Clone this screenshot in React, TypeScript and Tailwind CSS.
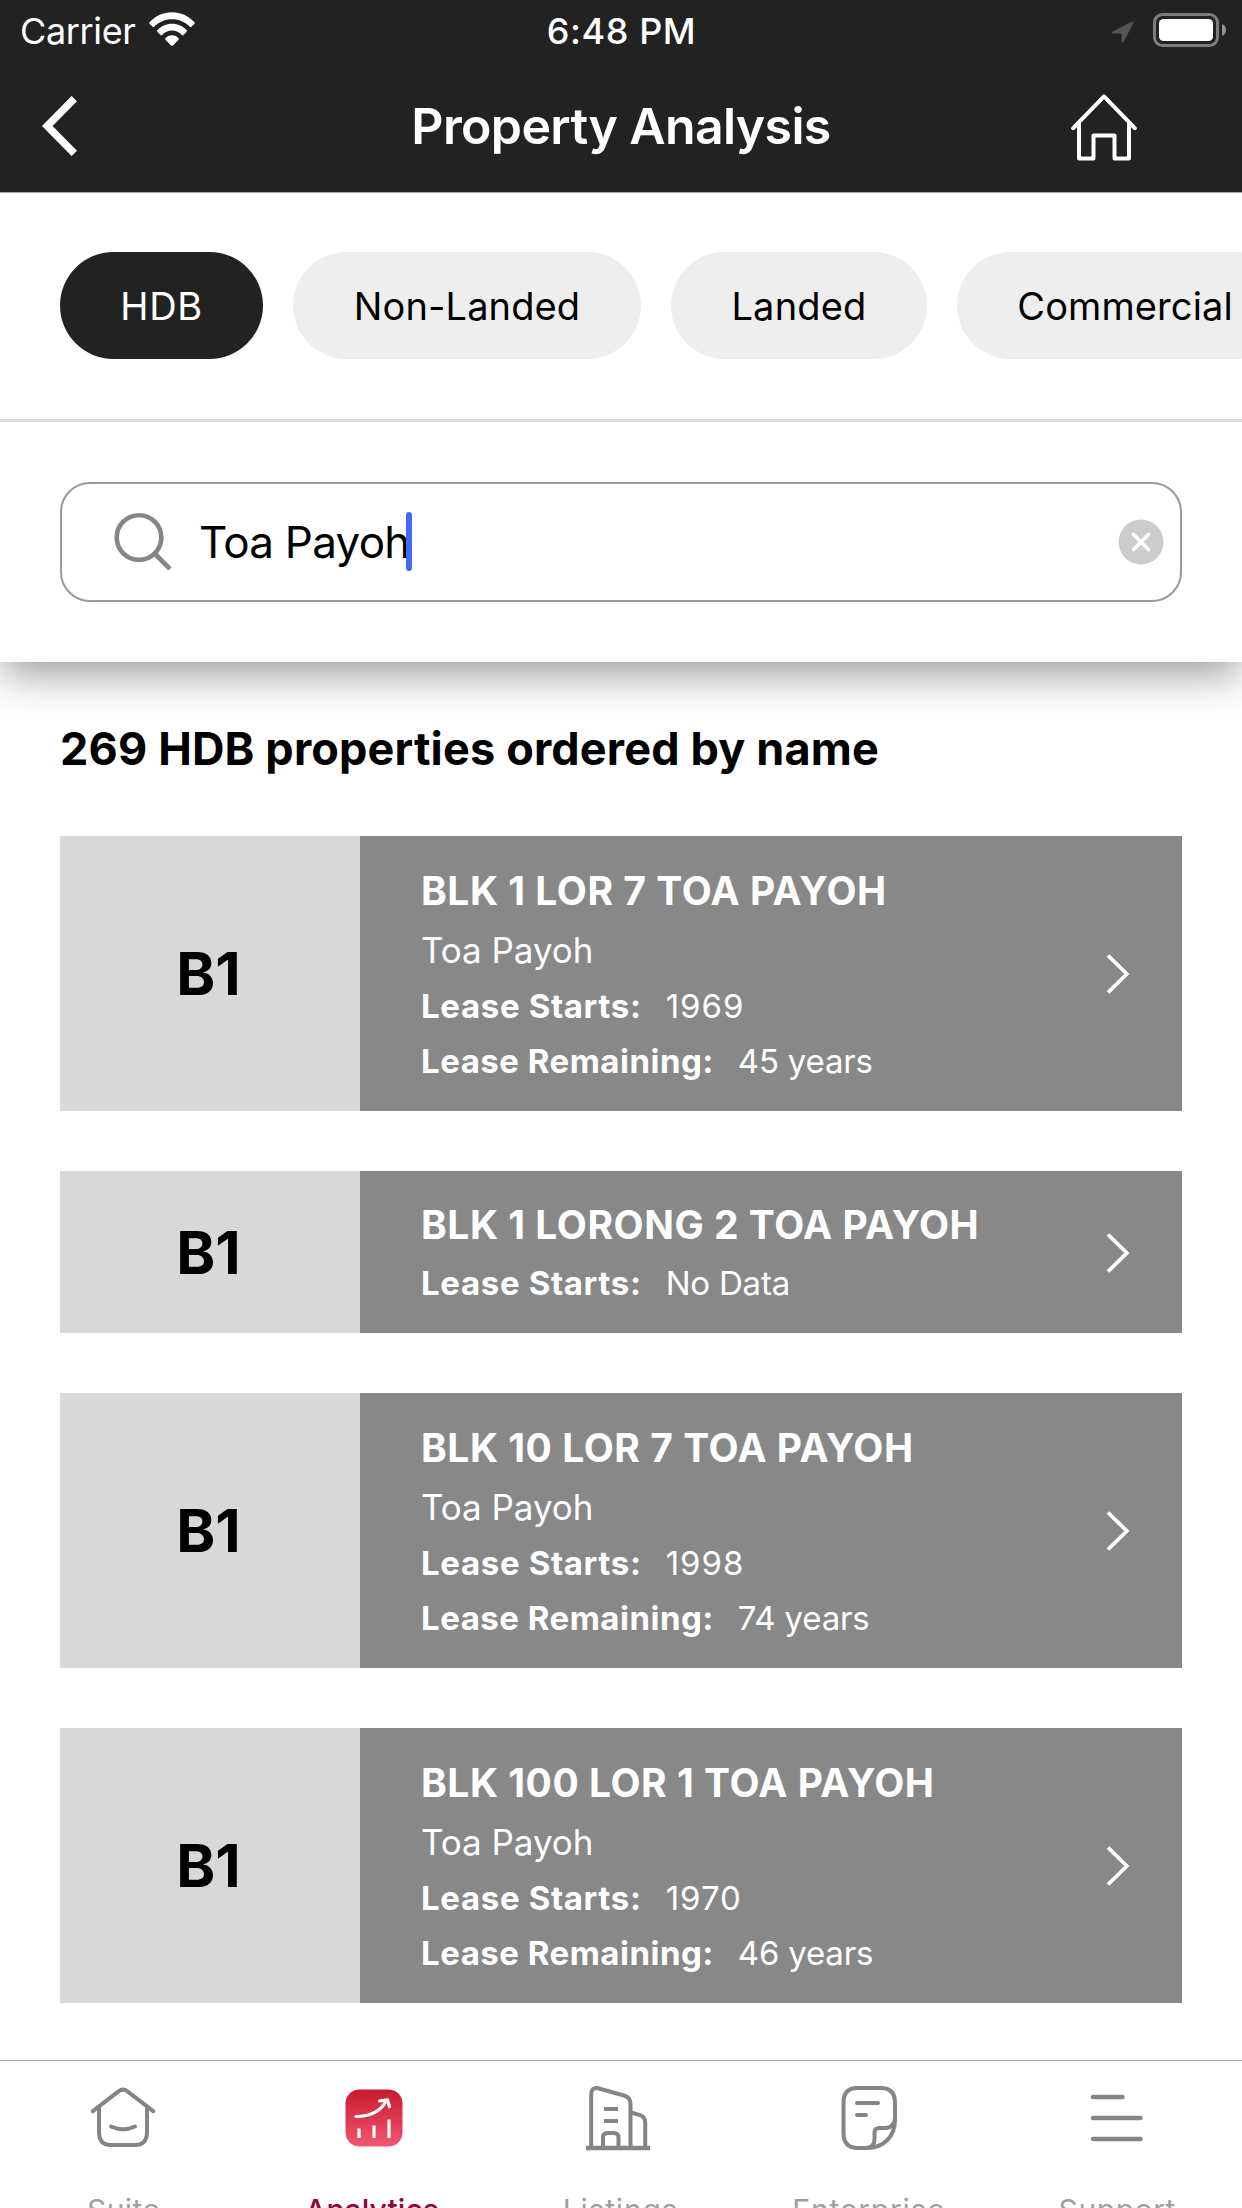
import React from 'react';

type Property = {
  code: string;
  name: string;
  area?: string;
  starts: string;
  remaining?: string;
};

const properties: Property[] = [
  { code: 'B1', name: 'BLK 1 LOR 7 TOA PAYOH', area: 'Toa Payoh', starts: '1969', remaining: '45 years' },
  { code: 'B1', name: 'BLK 1 LORONG 2 TOA PAYOH', starts: 'No Data' },
  { code: 'B1', name: 'BLK 10 LOR 7 TOA PAYOH', area: 'Toa Payoh', starts: '1998', remaining: '74 years' },
  { code: 'B1', name: 'BLK 100 LOR 1 TOA PAYOH', area: 'Toa Payoh', starts: '1970', remaining: '46 years' },
];

const categories = [
  { label: 'HDB', style: 'w-[203px] bg-[#222222] text-white tracking-[0.6px]' },
  { label: 'Non-Landed', style: 'w-[348px] bg-[#eeeeee] text-black tracking-[0.1px]' },
  { label: 'Landed', style: 'w-[256px] bg-[#eeeeee] text-black tracking-[0.2px]' },
  { label: 'Commercial', style: 'w-[334px] bg-[#eeeeee] text-black tracking-[0.1px] pl-[2px]' },
];

function StatusBar() {
  return (
    <div className="grid h-[62px] grid-cols-3 items-center pl-[20px] pr-[15px] text-[36px]">
      <div className="flex items-center">
        <span className="w-[129px] tracking-[-0.35px]">Carrier</span>
        <svg width="46" height="34" viewBox="0 0 46 34" className="-mt-1" fill="white">
          <path d="M0.5 10.2C6.5 3.8 14.3 0.3 23 0.3s16.5 3.5 22.5 9.9c.4.5.4 1 0 1.500l-3 3c-.5.500-1.100.500-1.600 0C36 9.800 29.800 7.200 23 7.200S10 9.800 5.100 14.700c-.5.500-1.100.500-1.600 0l-3-3c-.4-.5-.4-1 0-1.500z" />
          <path d="M8.300 18.200C12.200 14 17.300 11.700 23 11.700s10.800 2.300 14.700 6.500c.4.500.4 1 0 1.500l-3.200 3.200c-.5.500-1.100.500-1.600 0-2.700-2.700-6.100-4.300-9.900-4.300s-7.200 1.600-9.900 4.300c-.5.500-1.100.500-1.600 0l-3.200-3.200c-.4-.5-.4-1 0-1.500z" />
          <path d="M16.400 26.300c1.800-1.900 4-3 6.600-3s4.800 1.100 6.600 3c.4.500.4 1 0 1.500l-5.700 5.600c-.6.600-1.200.6-1.800 0l-5.700-5.600c-.4-.5-.4-1 0-1.500z" />
        </svg>
      </div>
      <span className="pr-[4px] text-center font-medium tracking-[0.6px] whitespace-nowrap">6:48 PM</span>
      <div className="flex items-center justify-end gap-[19px]">
        <svg width="22" height="22" viewBox="0 0 22 22" className="mt-[1px]">
          <path d="M20.500 0.400 1 10.200C-.4 11 0 12.400 1.500 12.400H8.800c.4 0 .7.300.7.700v7.200c0 1.600 1.600 2 2.300.5L21.500 1.700c.4-.9-.2-1.700-1-1.300z" fill="#545454" />
        </svg>
        <svg width="74" height="34" viewBox="0 0 74 34" className="-mt-[2px]">
          <rect x="1.500" y="1.500" width="63" height="31" rx="8" fill="none" stroke="#7d7d7d" strokeWidth="3" />
          <rect x="6" y="6" width="54" height="22" rx="4.500" fill="white" />
          <path d="M69 11c2.600 1 4 3.300 4 6s-1.400 5-4 6z" fill="#909090" />
        </svg>
      </div>
    </div>
  );
}

function NavBar() {
  return (
    <div className="grid h-[130px] grid-cols-[1fr_auto_1fr] items-center pb-[2px]">
      <svg width="36" height="60" viewBox="0 0 36 60" className="ml-[42px]" fill="none" stroke="white" strokeWidth="7.500">
        <path d="M32.300 2.600 5.200 30l27.100 27.400" />
      </svg>
      <h1 className="text-[50px] font-semibold tracking-[-0.65px]">Property Analysis</h1>
      <svg width="66" height="67" viewBox="0 0 66 67" className="mr-[105px] mt-[2px] justify-self-end" fill="none" stroke="white" strokeWidth="4" strokeLinejoin="round" strokeLinecap="round">
        <path d="M2.200 34.200 33 2.400l30.800 31.800" />
        <path d="M8 30v34.500h14.500v-23h21v23H58V30" />
      </svg>
    </div>
  );
}

function SearchField() {
  return (
    <div className="flex h-[120px] items-center rounded-[30px] border-2 border-[#9a9a9a] pl-[52px] pr-[16px]">
      <svg width="58" height="58" viewBox="0 0 58 58" className="-mt-[2px]" fill="none" stroke="#858585" strokeWidth="4.600">
        <circle cx="25" cy="25.500" r="22.300" />
        <path d="m40.500 41.500 15.500 15.500" />
      </svg>
      <span className="ml-[27px] text-[44px] tracking-[-0.75px] text-black">Toa Payoh</span>
      <span className="-ml-[4px] -mt-[2px] h-[59px] w-[6px] rounded-full bg-[#4169f5]" />
      <svg width="46" height="46" viewBox="0 0 46 46" className="ml-auto -mt-[1px]">
        <circle cx="23" cy="23" r="22.500" fill="#cccccc" />
        <path d="m15.500 15.500 15 15m0-15-15 15" stroke="white" strokeWidth="3.800" strokeLinecap="round" />
      </svg>
    </div>
  );
}

function LeaseLine({ label, value, labelStyle }: { label: string; value: string; labelStyle: string }) {
  const isYear = /^\d+$/.test(value);
  return (
    <p className="flex gap-[24px] text-[33px] leading-[55px] whitespace-nowrap">
      <span className={`font-bold ${labelStyle}`}>{label}</span>
      <span className={isYear ? 'tracking-[1px]' : 'tracking-[-0.2px]'}>{value}</span>
    </p>
  );
}

function PropertyCard({ property }: { property: Property }) {
  return (
    <li className={`flex ${property.area ? 'h-[275px]' : 'h-[162px]'}`}>
      <div className="flex w-[300px] items-center justify-center bg-[#d8d8d8] pt-[2px] pr-[3px] text-[59px] font-bold text-black">
        {property.code}
      </div>
      <div className="flex flex-1 items-center justify-between bg-[#888888] pl-[61px] pr-[52px] text-white">
        <div className={`self-start ${property.area ? 'pt-[27px]' : 'pt-[26px]'}`}>
          <h3 className="mb-[3px] text-[39px] leading-[56px] font-bold tracking-[0.53px] whitespace-nowrap">{property.name}</h3>
          {property.area && <p className="text-[35px] leading-[57px] tracking-[-0.05px]">{property.area}</p>}
          <LeaseLine label="Lease Starts:" value={property.starts} labelStyle="tracking-[0.65px]" />
          {property.remaining && (
            <LeaseLine label="Lease Remaining:" value={property.remaining} labelStyle="tracking-[0.5px]" />
          )}
        </div>
        <svg width="24" height="40" viewBox="0 0 24 40" className="mt-[1px]" fill="none" stroke="white" strokeWidth="3.800">
          <path d="M2 1.500 20.800 20 2 38.500" />
        </svg>
      </div>
    </li>
  );
}

function SuiteIcon() {
  return (
    <svg width="66" height="66" viewBox="0 0 66 66" className="mr-[3px]" fill="none" stroke="#858585" strokeWidth="4" strokeLinecap="round">
      <path d="M2.800 26.200 28.500 6.300q4.500-3.300 9 0L63.200 26.200" />
      <path d="M9 22v24.500Q9 60 20.500 60h25Q57 60 57 46.500V22" />
      <path d="M21 41.500q12 5.600 24 0" />
    </svg>
  );
}

function AnalyticsIcon() {
  return (
    <svg width="66" height="66" viewBox="0 0 66 66" className="ml-[3px]" fill="none">
      <defs>
        <linearGradient id="analytics" x1="0" y1="0" x2="0" y2="1">
          <stop offset="0" stopColor="#c71a2e" />
          <stop offset="1" stopColor="#f25672" />
        </linearGradient>
      </defs>
      <rect x="4.500" y="4.500" width="57" height="57" rx="14" fill="url(#analytics)" />
      <g stroke="white" strokeWidth="3.200">
        <path d="M15 31.500c15 0 24.500-5 30-15.500" strokeLinecap="round" />
        <path d="m38.500 16 8-1.200 2 7" strokeLinecap="round" strokeLinejoin="round" />
        <path d="M18 43.500v9.500M33 40.500V53M48 34.500V53" />
      </g>
    </svg>
  );
}

function ListingsIcon() {
  return (
    <svg width="66" height="66" viewBox="0 0 66 66" className="mr-[6px]" fill="none" stroke="#858585" strokeWidth="4">
      <path d="M1 63h64" strokeWidth="4.400" />
      <path d="M6.200 63V10.500Q6.200 1.500 13 3.200L39 10.500Q45.500 12.300 45.500 19V63" />
      <path d="M46 27.500 55 30.200Q60.200 32 60.200 38V63" />
      <path d="M19 24h14M19 36h14" />
      <path d="M18 63V52.500Q18 48 22.500 48h6.500Q33.500 48 33.500 52.500V63" />
    </svg>
  );
}

function EnterpriseIcon() {
  return (
    <svg width="66" height="66" viewBox="0 0 66 66" fill="none" stroke="#858585" strokeWidth="4" strokeLinecap="round" strokeLinejoin="round">
      <path d="M7.500 33V18Q7.500 3 21 3H45Q59 3 59 18V35C59 51 48 63 31 63H22Q7.500 63 7.500 48z" />
      <path d="M30 63Q38.500 62.500 38.500 54.500V48Q38.500 42.500 44 43H50Q59 42 59 32" />
      <path d="M21 18h21M21 30h9" />
    </svg>
  );
}

function SupportIcon() {
  return (
    <svg width="66" height="66" viewBox="0 0 66 66" className="mr-[2px]" fill="none" stroke="#858585" strokeWidth="4.400" strokeLinecap="round">
      <path d="M9 12h29.500M9 33h47.500M9 54h47.500" />
    </svg>
  );
}

const tabs = [
  { label: 'Suite', icon: <SuiteIcon />, style: 'text-[#a0a0a0] tracking-[0.4px]' },
  { label: 'Analytics', icon: <AnalyticsIcon />, style: 'text-[#990033] font-medium tracking-[0.1px]' },
  { label: 'Listings', icon: <ListingsIcon />, style: 'text-[#a0a0a0] tracking-[0.8px]' },
  { label: 'Enterprise', icon: <EnterpriseIcon />, style: 'text-[#a0a0a0] tracking-[0.8px]' },
  { label: 'Support', icon: <SupportIcon />, style: 'text-[#a0a0a0] tracking-[0.6px]' },
];

export default function App() {
  return (
    <div className="flex h-[2208px] w-[1242px] flex-col overflow-hidden bg-white font-['Inter',sans-serif]">
      <header className="relative z-20 shrink-0 border-b border-[#aaaaaa] bg-[#222222] text-white">
        <StatusBar />
        <NavBar />
      </header>

      <section className="relative z-10 shrink-0 bg-white shadow-[0_14px_40px_-2px_rgba(0,0,0,0.4)]">
        <div className="flex gap-[30px] overflow-hidden border-b-[3px] border-[#dddddd] pt-[59px] pb-[60px] pl-[60px]">
          {categories.map((c) => (
            <button key={c.label} className={`h-[107px] shrink-0 rounded-full pt-[2px] text-[38px] ${c.style}`}>
              {c.label}
            </button>
          ))}
        </div>
        <div className="p-[60px]">
          <SearchField />
        </div>
      </section>

      <main className="min-h-0 flex-1 px-[60px] pt-[59px]">
        <h2 className="text-[45px] leading-[56px] font-bold tracking-[0.17px] text-black">
          269 HDB properties ordered by name
        </h2>
        <ul className="mt-[59px] flex flex-col gap-[60px]">
          {properties.map((p) => (
            <PropertyCard key={p.name} property={p} />
          ))}
        </ul>
      </main>

      <nav className="grid h-[148px] shrink-0 grid-cols-5 overflow-hidden border-t border-[#aaaaaa] bg-white">
        {tabs.map((t) => (
          <a key={t.label} className="flex flex-col items-center pt-[24px]">
            <span className="shrink-0">{t.icon}</span>
            <span className={`mt-[37px] mr-px shrink-0 text-[30px] leading-[44px] ${t.style}`}>{t.label}</span>
          </a>
        ))}
      </nav>
    </div>
  );
}
